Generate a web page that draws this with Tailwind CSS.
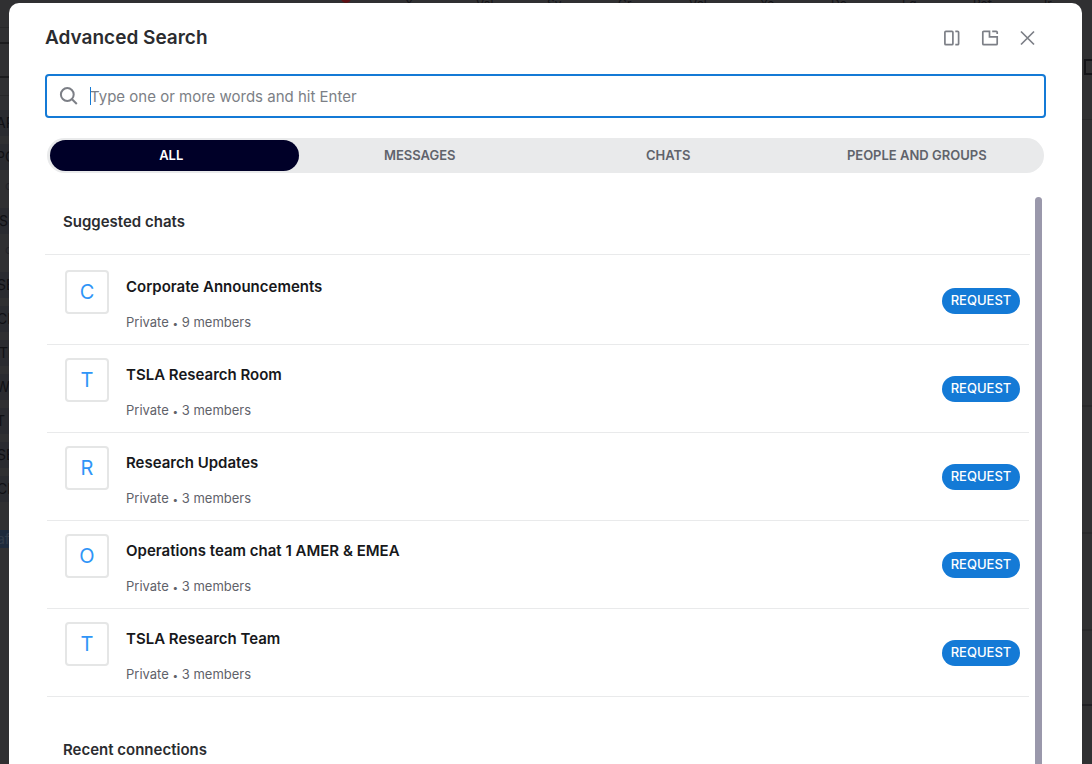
<!DOCTYPE html>
<html lang="en">
<head>
    <meta charset="UTF-8">
    <meta name="viewport" content="width=device-width, initial-scale=1.0">
    <title>Advanced Search</title>
    <script src="https://cdn.jsdelivr.net/npm/@tailwindcss/browser@4"></script>
</head>
<body class="relative h-screen overflow-hidden bg-[#303032] font-['Inter','Liberation_Sans',sans-serif]">
    <!-- Dimmed page behind the dialog -->
    <div class="flex h-full justify-between text-[14px] text-[#101014]" aria-hidden="true">
        <div class="-ml-1 flex w-12 shrink-0 flex-col overflow-hidden whitespace-nowrap bg-[#303032]">
            <div class="h-7 border-b border-[#28282a]"></div>
            <div class="h-4 border-b-2 border-[#1c1c1e]"></div>
            <div class="h-[34px] border-b-2 border-[#1c1c1e]"></div>
            <div class="h-[18px] border-b border-[#28282a]"></div>
            <div class="flex flex-col gap-2 pt-[14px]">
                <div class="h-[26px] bg-[#2a2b30] leading-[26px]">AR</div>
                <div class="h-[26px] bg-[#2a2b30] leading-[26px]">PO</div>
                <div class="h-[22px] pl-[9px] text-[12px] leading-4 text-[#232328]">c</div>
                <div class="h-[26px] bg-[#2a2b30] pl-[3px] leading-[26px]">S</div>
                <div class="h-[22px] pl-[9px] text-[12px] leading-4 text-[#232328]">c</div>
                <div class="h-[26px] bg-[#2a2b30] pl-px leading-[26px]">SE</div>
                <div class="h-[26px] bg-[#2a2b30] pl-px leading-[26px]">CI</div>
                <div class="h-[26px] bg-[#2a2b30] pl-[3px] leading-[26px]">TI</div>
                <div class="h-[26px] bg-[#2a2b30] leading-[26px]">W</div>
                <div class="h-[26px] bg-[#2a2b30] leading-[26px]">T</div>
                <div class="h-[26px] bg-[#2a2b30] pl-px leading-[26px]">SE</div>
                <div class="h-[26px] bg-[#2a2b30] pl-px leading-[26px]">CI</div>
            </div>
            <div class="mt-7 h-[18px] bg-[#1d2a3c] pl-px leading-[18px] text-[#323c4a]">af</div>
        </div>
        <!-- Column heads of the grid -->
        <div class="flex h-3 min-w-0 flex-1 overflow-hidden pl-[297px] text-[12px] leading-3 text-[#141418]">
            <span class="-mt-[7px] mr-[54px] size-[10px] shrink-0 rounded-full bg-[#5c1015]"></span>
            <span class="-mt-0.5 w-[71px] shrink-0">X</span>
            <span class="-mt-0.5 w-[71px] shrink-0">Val</span>
            <span class="-mt-0.5 w-[71px] shrink-0">Sv</span>
            <span class="-mt-0.5 w-[71px] shrink-0">Gr</span>
            <span class="-mt-0.5 w-[71px] shrink-0">Vol</span>
            <span class="-mt-0.5 w-[71px] shrink-0">Ye</span>
            <span class="-mt-0.5 w-[71px] shrink-0">Do</span>
            <span class="-mt-0.5 w-[71px] shrink-0">Eq</span>
            <span class="-mt-0.5 w-[71px] shrink-0">Ref</span>
            <span class="-mt-0.5 shrink-0">Ire</span>
        </div>
        <div class="w-10 shrink-0 bg-[#303032]">
            <div class="flex h-[120px] flex-col items-end border-b border-[#29292b] pt-[59px]">
                <div class="h-4 w-2 border-2 border-r-0 border-[#141418]"></div>
            </div>
            <div class="h-[287px] border-b-2 border-[#29292b]"></div>
            <div class="h-[127px] border-b-2 border-[#29292b]"></div>
            <div class="h-[97px] border-b-2 border-[#29292b]"></div>
            <div class="h-[75px] border-b-2 border-[#202024]"></div>
        </div>
    </div>

    <!-- Dialog -->
    <div role="dialog" aria-labelledby="dialogTitle" class="absolute top-[3px] right-[10px] bottom-0 left-[9px] flex flex-col rounded-t-[10px] bg-white px-9">
        <header class="flex h-[71px] items-center justify-between pr-2">
            <h1 id="dialogTitle" class="pb-px text-[19px] leading-6 font-semibold text-[#2b2c30]">Advanced Search</h1>
            <div class="flex gap-[18px] pb-px text-[#7c7f86]">
                <button type="button" aria-label="Dock to side">
                    <svg class="size-5" viewBox="0 0 20 20" fill="none" stroke="currentColor" stroke-width="1.7">
                        <rect x="2.9" y="3.300" width="8" height="13.400" rx="1"/>
                        <path d="M13.300 3.300h2.300q1 0 1 1v11.400q0 1-1 1h-2.300"/>
                    </svg>
                </button>
                <button type="button" aria-label="Open in new window">
                    <svg class="size-5" viewBox="0 0 20 20" fill="none" stroke="currentColor" stroke-width="1.7">
                        <path d="M9.500 3.300H3.800q-1 0-1 1v11.400q0 1 1 1h12.400q1 0 1-1V8.800H9.500z"/>
                        <path d="M12.200 3.300h4q1 0 1 1v1.700"/>
                    </svg>
                </button>
                <button type="button" aria-label="Close">
                    <svg class="size-5" viewBox="0 0 20 20" fill="none" stroke="currentColor" stroke-width="1.7">
                        <path d="M3 3.500l13 13M16 3.500l-13 13"/>
                    </svg>
                </button>
            </div>
        </header>

        <!-- Search box -->
        <div class="relative flex h-11 shrink-0 items-center rounded-[4px] border-2 border-[#147ad6] pl-3">
            <svg class="size-5 shrink-0 text-[#7c7f86]" viewBox="0 0 20 20" fill="none" stroke="currentColor" stroke-width="2">
                <circle cx="8.300" cy="8.500" r="6.400"/>
                <path d="M12.800 13l5 5"/>
            </svg>
            <input type="text" aria-label="Search" placeholder="Type one or more words and hit Enter"
                   class="h-full min-w-0 flex-1 pl-[11px] text-[15px] text-[#2b2c30] outline-none placeholder:text-[#7c7f86]">
            <span class="absolute top-[11px] left-[43px] h-[18px] w-px bg-[#147ad6]"></span>
        </div>

        <!-- Tabs -->
        <div role="tablist" class="mx-0.5 mt-5 flex h-[35px] shrink-0 rounded-full bg-[#e9eaeb] py-0.5 pl-[3px] text-[13px] font-semibold text-[#60636b]">
            <button type="button" role="tab" aria-selected="true" class="flex-1 rounded-full bg-[#000028] pr-[6px] text-white">ALL</button>
            <button type="button" role="tab" aria-selected="false" class="flex-1 pr-[6px]">MESSAGES</button>
            <button type="button" role="tab" aria-selected="false" class="flex-1 pr-[6px]">CHATS</button>
            <button type="button" role="tab" aria-selected="false" class="flex-1 pr-[6px]">PEOPLE AND GROUPS</button>
        </div>

        <!-- Results -->
        <div class="mt-6 flex min-h-0 flex-1 justify-between gap-[5px] overflow-hidden pr-1">
            <div class="flex-1">
                <h2 class="h-[58px] border-b border-[#e9eaeb] pt-[13px] pl-[18px] text-[15px] leading-6 font-semibold text-[#2b2c30]">Suggested chats</h2>
                <ul class="mr-px ml-0.5 pt-0.5">
                    <li class="flex h-[88px] items-center border-b border-[#e9eaeb] pr-[9px] pl-[18px]">
                        <span class="mt-[13px] flex size-11 items-center justify-center self-start rounded-[4px] border-2 border-[#e5e6e6] text-[20px] text-[#2f95f7]">C</span>
                        <div class="ml-[17px] flex-1 self-start pt-[18px]">
                            <h3 class="text-[15px] leading-6 font-semibold text-[#17181b]">Corporate Announcements</h3>
                            <p class="mt-[13px] text-[13px] leading-5 text-[#5f626a]">Private <span class="text-[10px]">•</span> 9 members</p>
                        </div>
                        <button type="button" class="h-[26px] w-[78px] rounded-full bg-[#147ad6] text-[13px] font-medium text-white">REQUEST</button>
                    </li>
                    <li class="flex h-[88px] items-center border-b border-[#e9eaeb] pr-[9px] pl-[18px]">
                        <span class="mt-[13px] flex size-11 items-center justify-center self-start rounded-[4px] border-2 border-[#e5e6e6] text-[20px] text-[#2f95f7]">T</span>
                        <div class="ml-[17px] flex-1 self-start pt-[18px]">
                            <h3 class="text-[15px] leading-6 font-semibold text-[#17181b]">TSLA Research Room</h3>
                            <p class="mt-[13px] text-[13px] leading-5 text-[#5f626a]">Private <span class="text-[10px]">•</span> 3 members</p>
                        </div>
                        <button type="button" class="h-[26px] w-[78px] rounded-full bg-[#147ad6] text-[13px] font-medium text-white">REQUEST</button>
                    </li>
                    <li class="flex h-[88px] items-center border-b border-[#e9eaeb] pr-[9px] pl-[18px]">
                        <span class="mt-[13px] flex size-11 items-center justify-center self-start rounded-[4px] border-2 border-[#e5e6e6] text-[20px] text-[#2f95f7]">R</span>
                        <div class="ml-[17px] flex-1 self-start pt-[18px]">
                            <h3 class="text-[15px] leading-6 font-semibold text-[#17181b]">Research Updates</h3>
                            <p class="mt-[13px] text-[13px] leading-5 text-[#5f626a]">Private <span class="text-[10px]">•</span> 3 members</p>
                        </div>
                        <button type="button" class="h-[26px] w-[78px] rounded-full bg-[#147ad6] text-[13px] font-medium text-white">REQUEST</button>
                    </li>
                    <li class="flex h-[88px] items-center border-b border-[#e9eaeb] pr-[9px] pl-[18px]">
                        <span class="mt-[13px] flex size-11 items-center justify-center self-start rounded-[4px] border-2 border-[#e5e6e6] text-[20px] text-[#2f95f7]">O</span>
                        <div class="ml-[17px] flex-1 self-start pt-[18px]">
                            <h3 class="text-[15px] leading-6 font-semibold text-[#17181b]">Operations team chat 1 AMER &amp; EMEA</h3>
                            <p class="mt-[13px] text-[13px] leading-5 text-[#5f626a]">Private <span class="text-[10px]">•</span> 3 members</p>
                        </div>
                        <button type="button" class="h-[26px] w-[78px] rounded-full bg-[#147ad6] text-[13px] font-medium text-white">REQUEST</button>
                    </li>
                    <li class="flex h-[88px] items-center border-b border-[#e9eaeb] pr-[9px] pl-[18px]">
                        <span class="mt-[13px] flex size-11 items-center justify-center self-start rounded-[4px] border-2 border-[#e5e6e6] text-[20px] text-[#2f95f7]">T</span>
                        <div class="ml-[17px] flex-1 self-start pt-[18px]">
                            <h3 class="text-[15px] leading-6 font-semibold text-[#17181b]">TSLA Research Team</h3>
                            <p class="mt-[13px] text-[13px] leading-5 text-[#5f626a]">Private <span class="text-[10px]">•</span> 3 members</p>
                        </div>
                        <button type="button" class="h-[26px] w-[78px] rounded-full bg-[#147ad6] text-[13px] font-medium text-white">REQUEST</button>
                    </li>
                </ul>
                <h2 class="mt-7 pt-[13px] pl-[18px] text-[15px] leading-6 font-semibold text-[#2b2c30]">Recent connections</h2>
            </div>
            <!-- Scrollbar thumb -->
            <div class="w-[7px] rounded-t-full bg-[#9a98ab]"></div>
        </div>
    </div>
</body>
</html>
